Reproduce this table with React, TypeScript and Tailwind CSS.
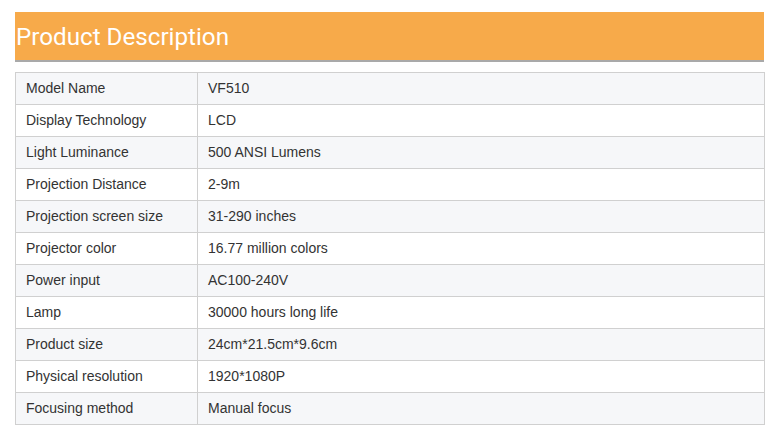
const specs: [string, string][] = [
  ['Model Name', 'VF510'],
  ['Display Technology', 'LCD'],
  ['Light Luminance', '500 ANSI Lumens'],
  ['Projection Distance', '2-9m'],
  ['Projection screen size', '31-290 inches'],
  ['Projector color', '16.77 million colors'],
  ['Power input', 'AC100-240V'],
  ['Lamp', '30000 hours long life'],
  ['Product size', '24cm*21.5cm*9.6cm'],
  ['Physical resolution', '1920*1080P'],
  ['Focusing method', 'Manual focus'],
];

export default function App() {
  return (
    <div className="w-[779px] h-[431px] bg-white px-[15px] pt-[12px] font-['Liberation_Sans',Arial,sans-serif]">
      <div className="h-[50px] bg-[#f7aa4a] border-b-2 border-[#a9a9a9] flex items-center pl-[1px]">
        <h2 className="text-white text-[24.2px] leading-none font-['Roboto',sans-serif] pt-[2px]">
          Product Description
        </h2>
      </div>
      <table className="mt-[10px] w-[750px] border-collapse text-[14px] text-[#333]">
        <tbody>
          {specs.map(([name, value], i) => (
            <tr key={name} className={i % 2 === 0 ? 'bg-[#f6f7f9]' : 'bg-white'}>
              <td className="w-[182px] h-[32px] border border-[#d0d0d0] px-[10px] py-0">{name}</td>
              <td className="h-[32px] border border-[#d0d0d0] px-[10px] py-0">{value}</td>
            </tr>
          ))}
        </tbody>
      </table>
    </div>
  );
}
